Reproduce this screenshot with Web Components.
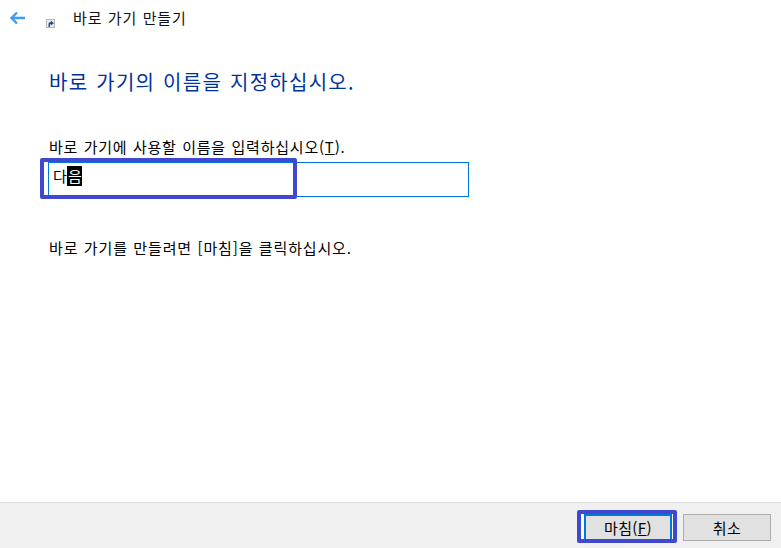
<!DOCTYPE html>
<html lang="ko">
<head>
<meta charset="utf-8">
<title>바로 가기 만들기</title>
<style>
  html, body { margin: 0; height: 100%; background: #fff; }
  body { font-family: "Noto Sans CJK KR", "Liberation Sans", sans-serif; }
</style>
</head>
<body>
<wizard-dialog>
  <wizard-header slot="header">바로 가기 만들기</wizard-header>
  <wizard-title>바로 가기의 이름을 지정하십시오.</wizard-title>
  <name-field value="다" selected="음"><span>바로 가기에 사용할 이름을 입력하십시오(<u>T</u>).</span></name-field>
  <wizard-note>바로 가기를 만들려면 [마침]을 클릭하십시오.</wizard-note>
  <wizard-button slot="footer" primary mark>마침(<u>F</u>)</wizard-button>
  <wizard-button slot="footer">취소</wizard-button>
</wizard-dialog>

<script>
class WizardDialog extends HTMLElement {
  constructor() {
    super();
    this.attachShadow({ mode: 'open' });
    this.shadowRoot.innerHTML = `
      <style>
        :host { display: flex; flex-direction: column; height: 548px; color: #000; }
        main { flex: 1; padding: 0 0 0 49px; }
        footer {
          height: 46px;
          box-sizing: border-box;
          border-top: 1px solid #dfdfdf;
          background: #f0f0f0;
          display: flex;
          justify-content: flex-end;
          align-items: flex-start;
          gap: 11px;
          padding: 11px 10px 0 0;
        }
      </style>
      <slot name="header"></slot>
      <main><slot></slot></main>
      <footer><slot name="footer"></slot></footer>
    `;
  }
}
customElements.define('wizard-dialog', WizardDialog);

class WizardHeader extends HTMLElement {
  constructor() {
    super();
    this.attachShadow({ mode: 'open' });
    this.shadowRoot.innerHTML = `
      <style>
        :host { display: flex; align-items: flex-start; height: 36px; font-size: 15px; line-height: 20px; }
        .back { width: 16px; height: 14px; margin: 11px 0 0 9px; }
        .icon { width: 9px; height: 9px; margin: 19px 0 0 21px; }
        .text { margin: 8px 0 0 18px; letter-spacing: 0.85px; word-spacing: 0.5px; color: #111; }
      </style>
      <svg class="back" viewBox="0 0 16 14" fill="none" stroke="#3f9bf5" stroke-width="2.4">
        <path d="M16 7H2.500M8 1.500L2.500 7l5.500 5.500"/>
      </svg>
      <svg class="icon" viewBox="0 0 9 9">
        <rect x="0.5" y="0.5" width="8" height="8" fill="#efefef" stroke="#b5b5b5"/>
        <path d="M2.500 8V5C2.500 3.800 3.400 3 4.800 3V1.500L8 4.200 4.800 6.600V5C4 5 4 5.500 4 6.500V8z" fill="#1f4f96"/>
      </svg>
      <span class="text"><slot></slot></span>
    `;
  }
}
customElements.define('wizard-header', WizardHeader);

class WizardTitle extends HTMLElement {
  constructor() {
    super();
    this.attachShadow({ mode: 'open' });
    this.shadowRoot.innerHTML = `
      <style>
        :host { display: block; margin-top: 32px; font-size: 20px; line-height: 28px; color: #003399; letter-spacing: 1.27px; word-spacing: 1px; }
      </style>
      <slot></slot>
    `;
  }
}
customElements.define('wizard-title', WizardTitle);

class NameField extends HTMLElement {
  constructor() {
    super();
    this.attachShadow({ mode: 'open' });
    this.shadowRoot.innerHTML = `
      <style>
        :host { display: block; position: relative; margin: 41px 0 0 -1px; font-size: 15px; }
        .label { display: block; height: 25px; line-height: 20px; padding-left: 1px; letter-spacing: 0.79px; word-spacing: 0.5px; }
        .box {
          width: 421px;
          height: 35px;
          box-sizing: border-box;
          border: 1px solid #0078d7;
          padding: 3px 0 0 4px;
          line-height: 20px;
        }
        .sel { background: #000; color: #fff; display: inline-block; height: 20px; width: 15px; text-align: center; margin-left: 0.5px; }
        .mark {
          position: absolute;
          left: -8px;
          top: 21px;
          width: 257px;
          height: 41px;
          box-sizing: border-box;
          border: 4px solid #4048d0;
          border-radius: 2px;
        }
      </style>
      <span class="label"><slot></slot></span>
      <div class="box"><span id="v"></span><span class="sel" id="s"></span></div>
      <div class="mark"></div>
    `;
  }
  connectedCallback() {
    this.shadowRoot.getElementById('v').textContent = this.getAttribute('value');
    this.shadowRoot.getElementById('s').textContent = this.getAttribute('selected');
  }
}
customElements.define('name-field', NameField);

class WizardNote extends HTMLElement {
  constructor() {
    super();
    this.attachShadow({ mode: 'open' });
    this.shadowRoot.innerHTML = `
      <style>
        :host { display: block; margin-top: 41px; font-size: 15px; line-height: 20px; letter-spacing: 0.85px; word-spacing: 0.5px; }
      </style>
      <slot></slot>
    `;
  }
}
customElements.define('wizard-note', WizardNote);

class WizardButton extends HTMLElement {
  constructor() {
    super();
    this.attachShadow({ mode: 'open' });
    this.shadowRoot.innerHTML = `
      <style>
        :host {
          display: block;
          position: relative;
          width: 88px;
          height: 27px;
          box-sizing: border-box;
          border: 1px solid #adadad;
          background: #e1e1e1;
          font-size: 15px;
          line-height: 25px;
          text-align: center;
          letter-spacing: 0.4px;
          color: #000;
        }
        :host([primary]) { border: 2px solid #0078d7; line-height: 23px; box-shadow: -3px 0 0 #fff, 1px 0 0 #fff; }
        :host([mark])::after {
          content: "";
          position: absolute;
          left: -9px;
          top: -6px;
          width: 100px;
          height: 33px;
          box-sizing: border-box;
          border: 4px solid #4048d0;
          border-radius: 2px;
        }
      </style>
      <slot></slot>
    `;
  }
}
customElements.define('wizard-button', WizardButton);
</script>
</body>
</html>
